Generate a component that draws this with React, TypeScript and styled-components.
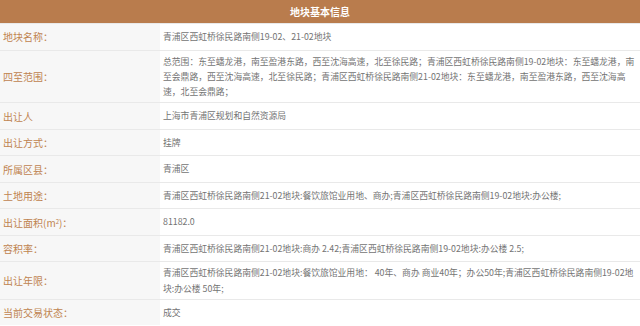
import React from 'react';
import styled, { createGlobalStyle } from 'styled-components';

type InfoRow = { label: React.ReactNode; value: string };

const rows: InfoRow[] = [
  { label: '地块名称：', value: '青浦区西虹桥徐民路南侧19-02、21-02地块' },
  {
    label: '四至范围：',
    value:
      '总范围：东至蟠龙港，南至盈港东路，西至沈海高速，北至徐民路；青浦区西虹桥徐民路南侧19-02地块：东至蟠龙港，南至会鼎路，西至沈海高速，北至徐民路；青浦区西虹桥徐民路南侧21-02地块：东至蟠龙港，南至盈港东路，西至沈海高速，北至会鼎路；',
  },
  { label: '出让人', value: '上海市青浦区规划和自然资源局' },
  { label: '出让方式：', value: '挂牌' },
  { label: '所属区县：', value: '青浦区' },
  {
    label: '土地用途：',
    value: '青浦区西虹桥徐民路南侧21-02地块:餐饮旅馆业用地、商办;青浦区西虹桥徐民路南侧19-02地块:办公楼;',
  },
  {
    label: (
      <>
        出让面积(m<sup>2</sup>)：
      </>
    ),
    value: '81182.0',
  },
  {
    label: '容积率：',
    value: '青浦区西虹桥徐民路南侧21-02地块:商办 2.42;青浦区西虹桥徐民路南侧19-02地块:办公楼 2.5;',
  },
  {
    label: '出让年限：',
    value:
      '青浦区西虹桥徐民路南侧21-02地块:餐饮旅馆业用地： 40年、商办 商业40年；办公50年;青浦区西虹桥徐民路南侧19-02地块:办公楼 50年;',
  },
  { label: '当前交易状态：', value: '成交' },
];

const GlobalStyle = createGlobalStyle`
  html, body {
    margin: 0;
    padding: 0;
    background: #ffffff;
  }
  body {
    font-family: "Noto Sans CJK SC", "Noto Sans", sans-serif;
  }
`;

const Panel = styled.div`
  width: 640px;
  display: flex;
  flex-direction: column;
`;

const Title = styled.div`
  height: 23px;
  background-color: #b97c4d;
  color: #ffffff;
  font-size: 10px;
  font-weight: 700;
  display: flex;
  align-items: center;
  justify-content: center;
`;

const Row = styled.div`
  display: grid;
  grid-template-columns: 160px 1fr;
  min-height: 25.5px;
  border-top: 1px solid #e9e9e9;
`;

const Label = styled.div`
  background-color: #f7f7f7;
  color: #bf8450;
  font-size: 10px;
  padding-left: 3px;
  display: flex;
  align-items: center;

  sup {
    font-size: 6px;
    line-height: 0;
  }
`;

const Value = styled.div`
  background-color: #ffffff;
  color: #737373;
  font-size: 8.8px;
  line-height: 15.3px;
  padding: 3px 3px;
  display: flex;
  align-items: center;
`;

const App: React.FC = () => {
  return (
    <>
      <GlobalStyle />
      <Panel>
        <Title>地块基本信息</Title>
        {rows.map((row, i) => (
          <Row key={i}>
            <Label>{row.label}</Label>
            <Value>{row.value}</Value>
          </Row>
        ))}
      </Panel>
    </>
  );
};

export default App;
